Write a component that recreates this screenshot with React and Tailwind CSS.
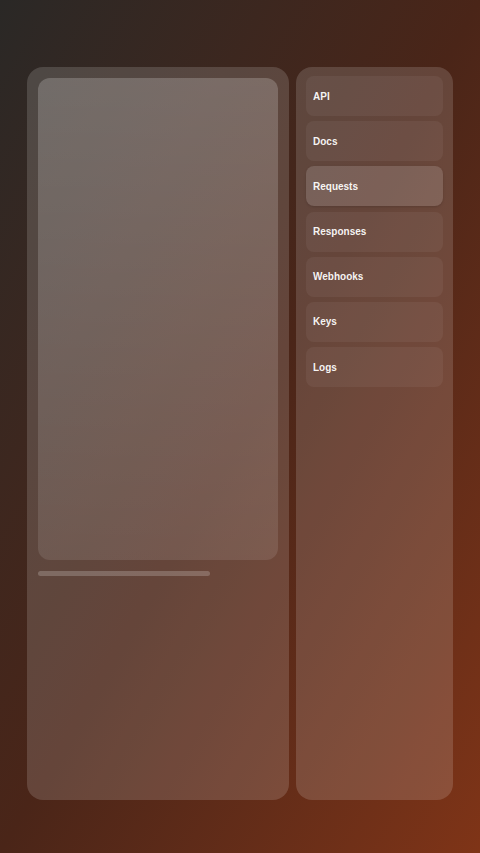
const NAV = ['API', 'Docs', 'Requests', 'Responses', 'Webhooks', 'Keys', 'Logs'];

export default function App() {
  const active = 'Requests';

  return (
    <div
      className="min-h-[853px] w-full bg-gradient-to-br from-[#2a2826] via-[#4a2518] to-[#7f3417] px-[27px] pt-[67px] pb-[53px]"
      style={{ fontFamily: '"Liberation Sans", Arial, sans-serif' }}
    >
      <div className="flex h-[733px] gap-[7px]">
        {/* Main panel */}
        <div className="flex w-[262px] flex-col rounded-2xl bg-white/15 p-[11px]">
          <div className="h-[482px] rounded-xl bg-gradient-to-b from-white/20 to-white/10" />
          <div className="mt-[11px] h-[5px] w-[172px] rounded-full bg-white/20" />
        </div>

        {/* Side nav */}
        <div className="flex flex-1 flex-col gap-[5.2px] rounded-2xl bg-white/15 px-[10px] pt-[9px]">
          {NAV.map((item) => (
            <div
              key={item}
              className={`flex h-[40px] items-center rounded-lg px-[7px] text-[10px] font-bold text-white/95 ${
                item === active ? 'bg-white/15 shadow-sm' : 'bg-white/5'
              }`}
            >
              {item}
            </div>
          ))}
        </div>
      </div>
    </div>
  );
}
